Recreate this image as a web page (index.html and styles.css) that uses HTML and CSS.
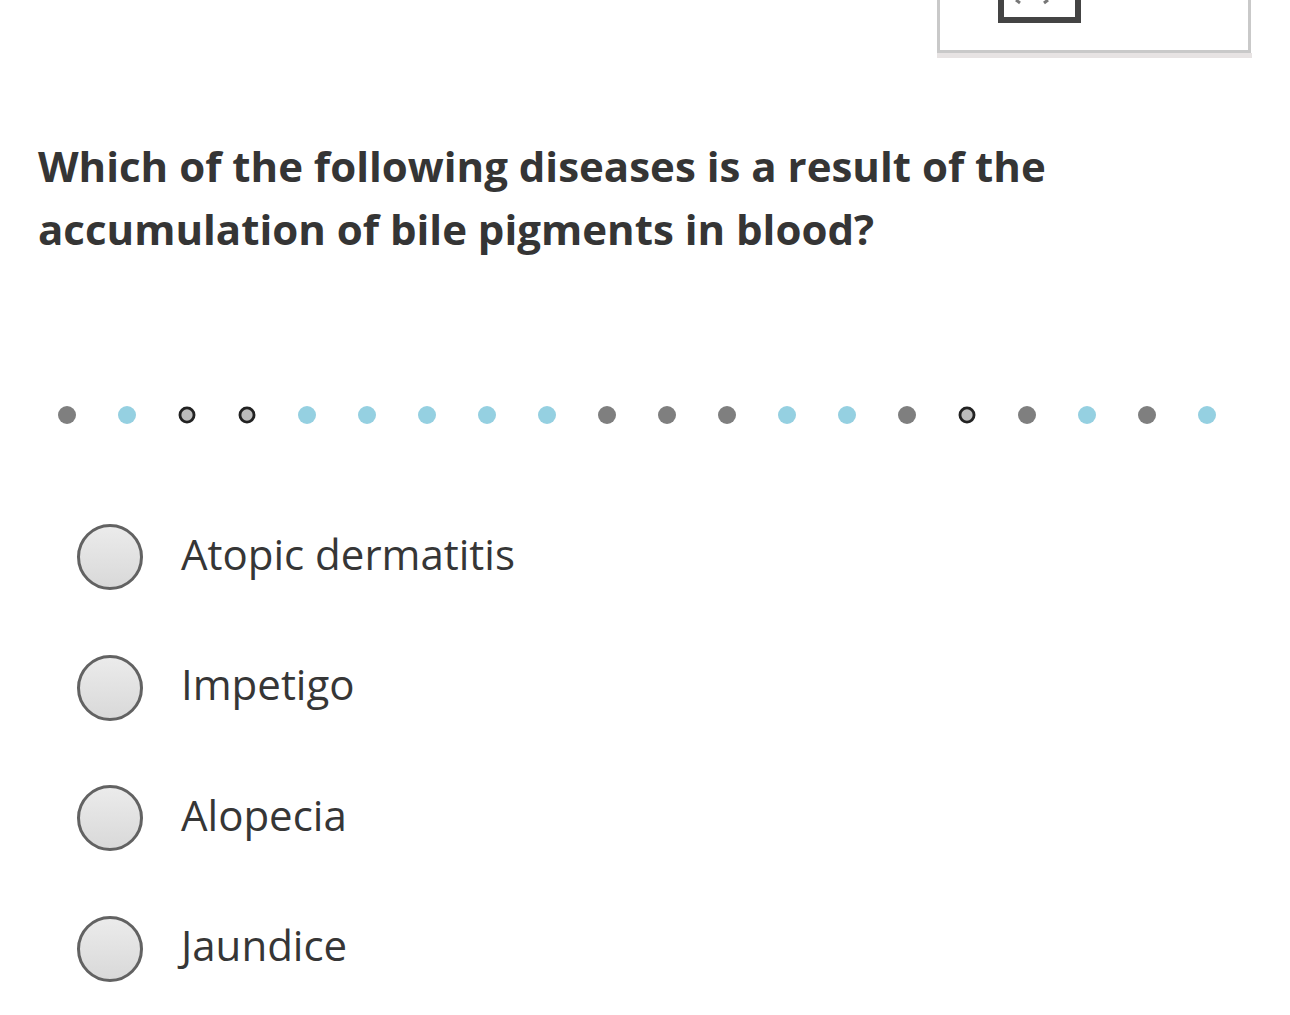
FILE: index.html
```html
<!DOCTYPE html>
<html lang="en">
<head>
<meta charset="utf-8">
<link rel="stylesheet" href="styles.css">
<title>Question</title>
</head>
<body>
<div class="top">
  <div class="media">
    <svg class="broken" width="84" height="24" viewBox="0 0 84 24">
      <path d="M3 -10 V20 H80 V-10" fill="none" stroke="#444" stroke-width="6"/>
      <path d="M18 0 L22 3" stroke="#777" stroke-width="3"/>
      <path d="M46 3 L50 0" stroke="#777" stroke-width="3"/>
    </svg>
  </div>
  <div class="media-shadow"></div>
</div>

<h1 class="question">Which of the following diseases is a result of the accumulation of bile pigments in blood?</h1>

<div class="dots">
  <span class="dot g"></span><span class="dot b"></span><span class="dot r"></span><span class="dot r"></span><span class="dot b"></span><span class="dot b"></span><span class="dot b"></span><span class="dot b"></span><span class="dot b"></span><span class="dot g"></span><span class="dot g"></span><span class="dot g"></span><span class="dot b"></span><span class="dot b"></span><span class="dot g"></span><span class="dot r"></span><span class="dot g"></span><span class="dot b"></span><span class="dot g"></span><span class="dot b"></span>
</div>

<div class="options">
  <label class="option"><span class="radio"></span><span class="label">Atopic dermatitis</span></label>
  <label class="option"><span class="radio"></span><span class="label">Impetigo</span></label>
  <label class="option"><span class="radio"></span><span class="label">Alopecia</span></label>
  <label class="option"><span class="radio"></span><span class="label">Jaundice</span></label>
</div>
</body>
</html>
```

FILE: styles.css
```css
html, body {
  margin: 0;
  padding: 0;
  background: #ffffff;
}
body {
  font-family: "Open Sans", "Noto Sans", sans-serif;
  color: #333333;
  width: 1290px;
  height: 1015px;
  overflow: hidden;
}
.top {
  margin-left: 937px;
  width: 314px;
}
.media {
  border: 3px solid #c9c9c9;
  border-top: none;
  background: #ffffff;
  box-sizing: border-box;
  height: 53px;
}
.broken {
  display: block;
  margin-left: 58px;
}
.media-shadow {
  height: 5px;
  background: #e7e3e3;
  width: 315px;
}
.question {
  margin: 76px 0 0 38px;
  width: 1040px;
  font-size: 42px;
  line-height: 63px;
  font-weight: 700;
  color: #353535;
}
.dots {
  display: flex;
  align-items: center;
  gap: 42px;
  padding-left: 58px;
  margin-top: 146px;
  height: 18px;
}
.dot {
  width: 18px;
  height: 18px;
  border-radius: 50%;
  box-sizing: border-box;
  flex: none;
}
.dot.g { background: #7f7f7f; }
.dot.b { background: #95d0e1; }
.dot.r {
  background: #bdbdbd;
  border: 3px solid #222222;
  transform: scale(0.94);
}
.options {
  margin-top: 68px;
}
.option {
  display: flex;
  align-items: center;
  height: 130.5px;
  padding-left: 77px;
}
.radio {
  width: 66px;
  height: 66px;
  border-radius: 50%;
  border: 3px solid #626262;
  box-sizing: border-box;
  background: linear-gradient(#ebebeb, #d9d9d9);
  flex: none;
}
.label {
  margin-left: 38px;
  padding-bottom: 8px;
  font-size: 42px;
  color: #363636;
}
```
